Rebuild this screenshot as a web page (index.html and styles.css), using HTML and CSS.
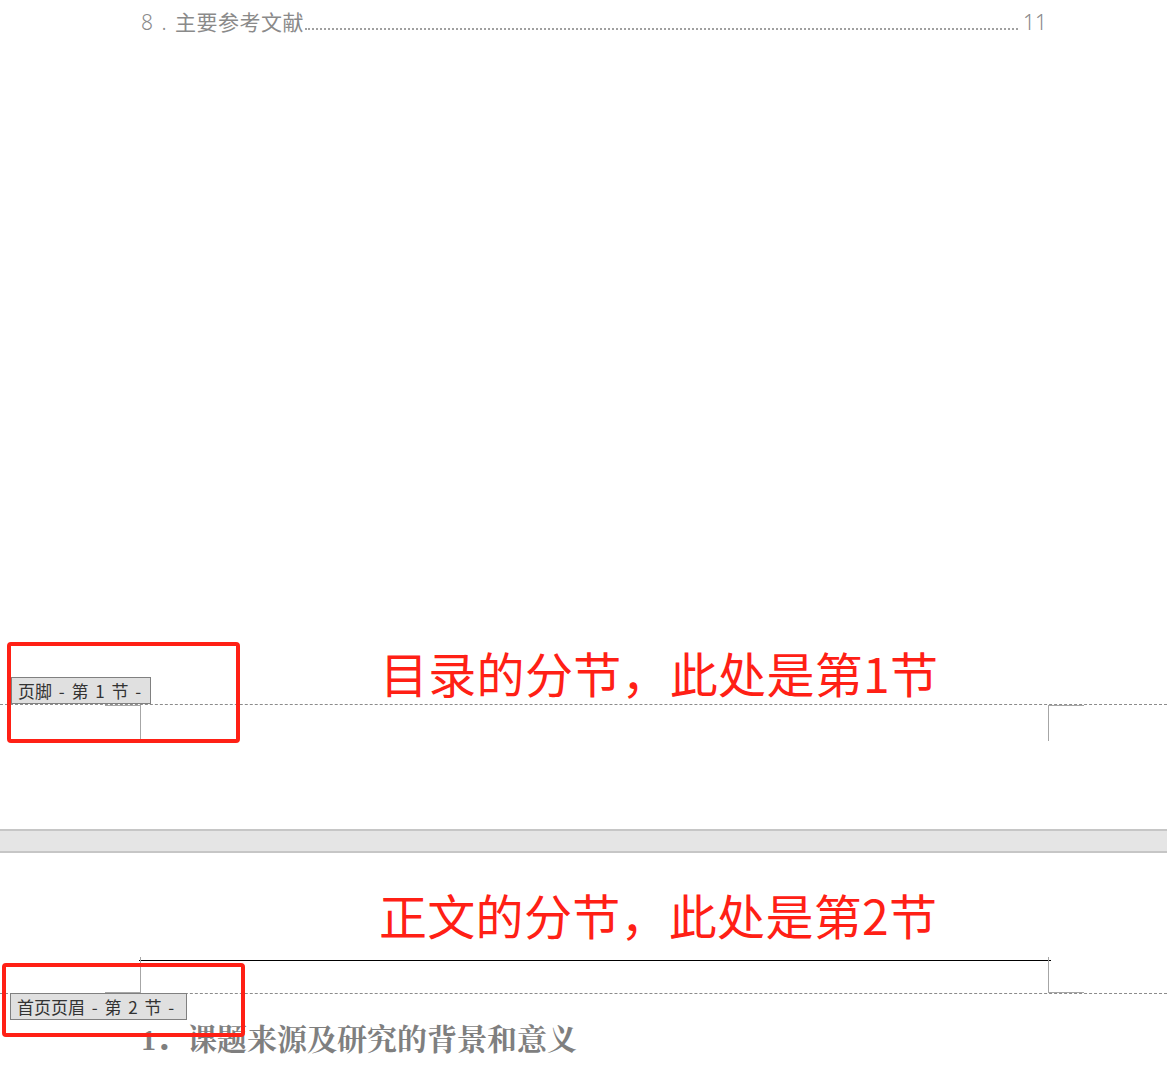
FILE: index.html
```html
<!DOCTYPE html>
<html lang="zh-CN">
<head>
<meta charset="utf-8">
<title>分节示意</title>
<link rel="stylesheet" href="styles.css">
</head>
<body>
<div class="doc">
  <section class="page page-one">
    <div class="toc-line">
      <span class="toc-num-left">8 . </span><span class="toc-title">主要参考文献</span>
      <span class="toc-leader"></span>
      <span class="toc-num">11</span>
    </div>
  </section>

  <section class="footer-zone">
    <div class="zone-label label-footer">页脚 - 第 1 节 -</div>
  </section>

  <div class="page-gap"></div>

  <section class="page page-two">
    <div class="header-zone">
      <div class="header-rule"></div>
      <div class="zone-label label-header">首页页眉 - 第 2 节 -</div>
    </div>
    <div class="body-zone">
      <h1 class="heading">1．<span class="heading-text">课题来源及研究的背景和意义</span></h1>
    </div>
  </section>

  <!-- crop marks -->
  <div class="mark mark-v mark-f-left"></div>
  <div class="mark mark-h mark-f-left-h"></div>
  <div class="mark mark-v mark-f-right"></div>
  <div class="mark mark-h mark-f-right-h"></div>
  <div class="mark mark-v mark-h-left"></div>
  <div class="mark mark-h mark-h-left-h"></div>
  <div class="mark mark-v mark-h-right"></div>
  <div class="mark mark-h mark-h-right-h"></div>

  <!-- annotations -->
  <div class="red-box red-box-one"></div>
  <div class="red-box red-box-two"></div>
  <div class="note note-one">目录的分节，此处是第1节</div>
  <div class="note note-two">正文的分节，此处是第2节</div>
</div>
</body>
</html>
```

FILE: styles.css
```css
html, body {
  margin: 0;
  padding: 0;
  background: #ffffff;
}

body {
  font-family: "Noto Sans CJK SC", "Noto Sans", sans-serif;
  width: 1167px;
  height: 1074px;
  overflow: hidden;
}

.doc {
  position: relative;
  width: 1167px;
  height: 1074px;
}

.page-one {
  height: 704px;
}

.toc-line {
  display: flex;
  align-items: baseline;
  padding: 8px 120px 0 141px;
  color: #8a8a8a;
  font-size: 21px;
  line-height: 26px;
}

.toc-num-left {
  white-space: pre;
  font-family: "Noto Sans", sans-serif;
  font-weight: 300;
  word-spacing: 3px;
}

.toc-title {
  letter-spacing: 0.5px;
  white-space: nowrap;
}

.toc-leader {
  flex: 1;
  border-bottom: 2px dotted #a0a0a0;
  margin: 0 5px 0 1px;
}

.toc-num {
  font-family: "Noto Sans", sans-serif;
  font-weight: 300;
  font-size: 21px;
}

.footer-zone {
  position: relative;
  height: 124px;
  border-top: 1px dashed #8c8c8c;
}

.zone-label {
  position: absolute;
  box-sizing: border-box;
  height: 27px;
  padding: 0 6px;
  background: #e0e0e0;
  border: 1px solid #808080;
  color: #333333;
  font-size: 17px;
  line-height: 25px;
  word-spacing: 3px;
  white-space: nowrap;
}

.label-footer {
  left: 11px;
  top: -28px;
  width: 140px;
}

.page-gap {
  box-sizing: border-box;
  height: 24px;
  background: #e5e5e5;
  border-top: 2px solid #c6c6c6;
  border-bottom: 2px solid #c6c6c6;
}

.header-zone {
  position: relative;
  height: 140px;
  border-bottom: 1px dashed #8c8c8c;
}

.header-rule {
  margin-left: 139px;
  width: 912px;
  padding-top: 107px;
  border-bottom: 1px solid #000000;
}

.label-header {
  left: 10px;
  top: 140px;
  width: 177px;
}

.body-zone {
  padding: 27px 0 0 141px;
}

.heading {
  margin: 0;
  font-family: "Liberation Serif", "Noto Sans CJK SC", serif;
  font-weight: bold;
  font-size: 30px;
  line-height: 32px;
  color: #7f7f7f;
}

.heading-text {
  margin-left: 1px;
  font-family: "Noto Serif CJK SC", "Noto Sans CJK SC", serif;
}

.mark {
  position: absolute;
  background: #a6a6a6;
}

.mark-v {
  width: 1px;
}

.mark-h {
  height: 1px;
}

.mark-f-left { left: 140px; top: 705px; height: 34px; }
.mark-f-left-h { left: 105px; top: 705px; width: 36px; }
.mark-f-right { left: 1048px; top: 705px; height: 36px; }
.mark-f-right-h { left: 1048px; top: 705px; width: 36px; }
.mark-h-left { left: 140px; top: 957px; height: 36px; }
.mark-h-left-h { left: 105px; top: 992px; width: 36px; }
.mark-h-right { left: 1048px; top: 957px; height: 36px; }
.mark-h-right-h { left: 1048px; top: 992px; width: 36px; }

.red-box {
  position: absolute;
  box-sizing: border-box;
  border: 4px solid #ff2015;
  border-radius: 4px;
}

.red-box-one {
  left: 7px;
  top: 642px;
  width: 233px;
  height: 101px;
}

.red-box-two {
  left: 2px;
  top: 963px;
  width: 243px;
  height: 74px;
}

.note {
  position: absolute;
  color: #ff2015;
  font-size: 48px;
  line-height: 48px;
  letter-spacing: 0.3px;
  white-space: nowrap;
}

.note-one {
  left: 380px;
  top: 648px;
}

.note-two {
  left: 379px;
  top: 890px;
}
```
